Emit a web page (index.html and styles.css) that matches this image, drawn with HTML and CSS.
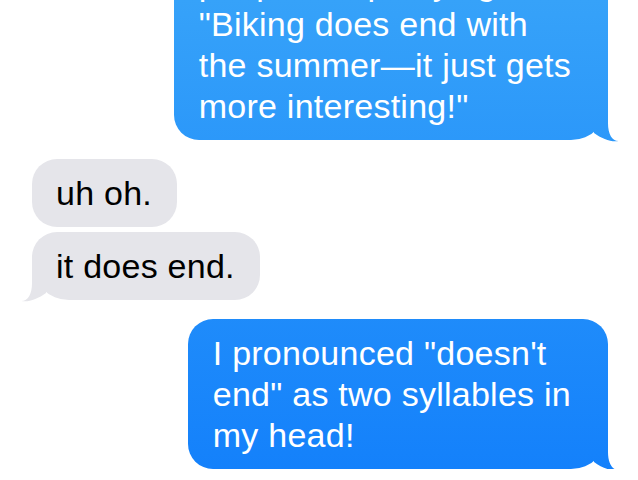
FILE: index.html
```html
<!DOCTYPE html>
<html lang="en">
<head>
    <meta charset="UTF-8">
    <meta name="viewport" content="width=device-width, initial-scale=1.0">
    <title>Messages</title>
    <link rel="stylesheet" href="styles.css">
</head>
<body>
    <div class="thread">
        <div class="group out">
            <div class="bubble tail">people keep saying<br>"Biking does end with<br>the summer—it just gets<br>more interesting!"</div>
        </div>

        <div class="group in">
            <div class="bubble">uh oh.</div>
            <div class="bubble tail">it does end.</div>
        </div>

        <div class="group out">
            <div class="bubble tail">I pronounced "doesn't<br>end" as two syllables in<br>my head!</div>
        </div>
    </div>
</body>
</html>
```

FILE: styles.css
```css
body {
    margin: 0;
    background-color: #fff;
    font-family: "Liberation Sans", Arial, sans-serif;
    overflow: hidden;
}

/* list is scrolled a little, first bubble starts above the screen */
.thread {
    display: flex;
    flex-direction: column;
    gap: 19px;
    margin-top: -51px;
    padding: 0 30px 0 32px;
}

.group {
    display: flex;
    flex-direction: column;
    gap: 5px;
}

.group.out { align-items: flex-end; }
.group.in { align-items: flex-start; }

.bubble {
    position: relative;
    font-size: 34px;
    line-height: 41px;
    letter-spacing: 0.25px;
    padding: 14px 25px 13px 24px;
    border-radius: 25px;
    white-space: nowrap;
}

.out .bubble {
    color: #fff;
    padding: 14px 37px 13px 25px;
    background: linear-gradient(to bottom, #36a2f9, #1380fb) fixed;
}

.in .bubble {
    color: #000;
    background-color: #e5e5ea;
}

.out .bubble.tail { border-bottom-right-radius: 37px; }
.in .bubble.tail { border-bottom-left-radius: 37px; }

.bubble.tail::after {
    content: "";
    position: absolute;
    bottom: -2px;
    width: 40px;
    height: 44px;
    clip-path: path("M 14 0 H 28 V 25 C 28 36, 32 43, 38.5 43 C 32 44.5, 22 41, 14 35 Z");
}

.out .bubble.tail::after {
    right: -12px;
    background: linear-gradient(to bottom, #36a2f9, #1380fb) fixed;
}

.in .bubble.tail::after {
    left: -12px;
    background-color: #e5e5ea;
    transform: scaleX(-1);
}
```
